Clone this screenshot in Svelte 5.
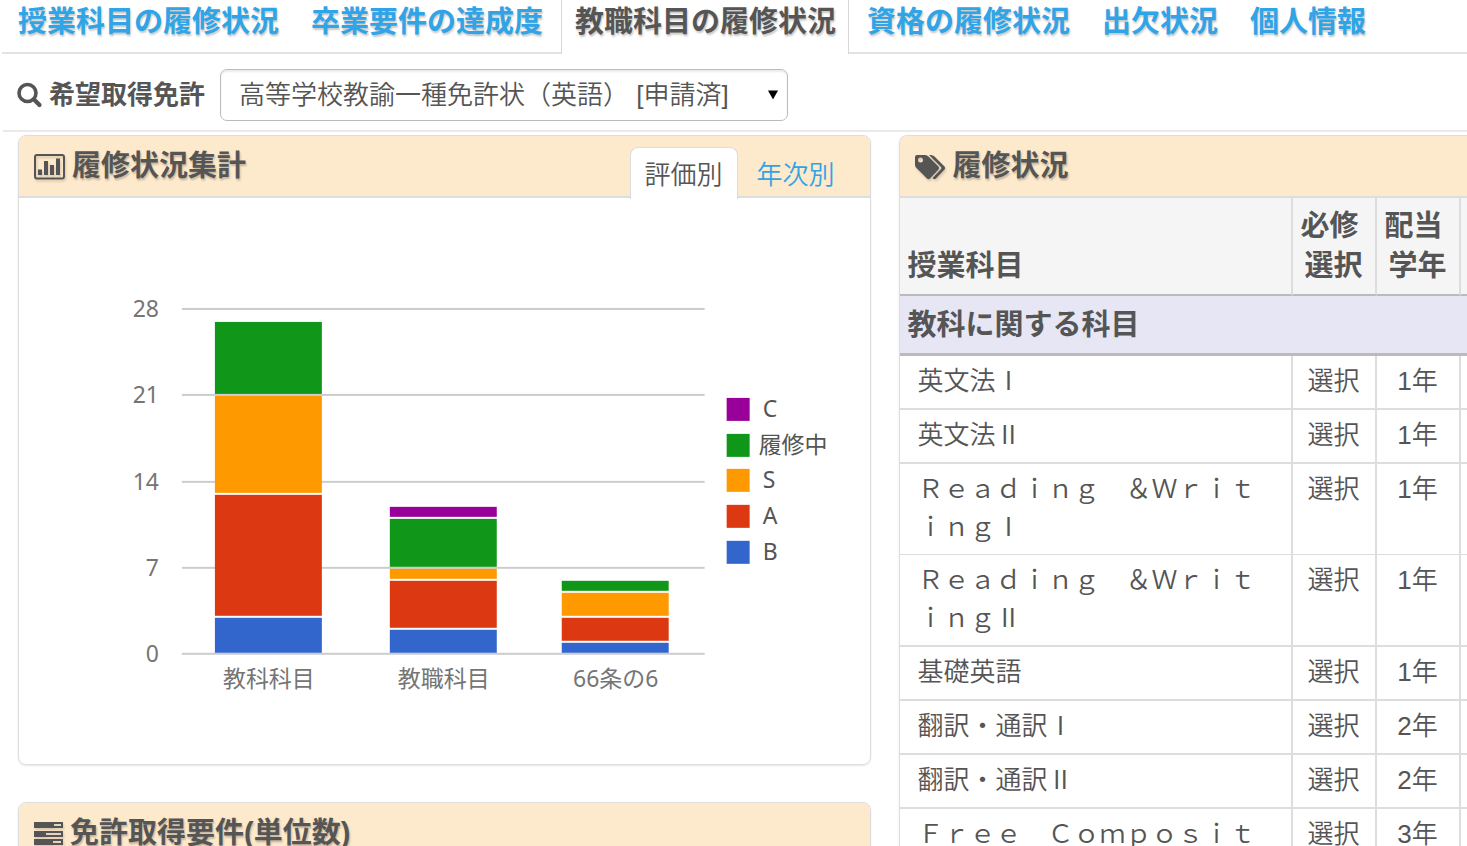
<script>
  const tabs = [
    '授業科目の履修状況',
    '卒業要件の達成度',
    '教職科目の履修状況',
    '資格の履修状況',
    '出欠状況',
    '個人情報',
  ];
  let activeTab = $state(2);
  let chartTab = $state(0);
  let license = $state('1');

  const colors = {
    B: '#3366cc',
    A: '#dc3912',
    S: '#ff9900',
    履修中: '#109618',
    C: '#990099',
  };
  const order = ['B', 'A', 'S', '履修中', 'C'];
  const legend = ['C', '履修中', 'S', 'A', 'B'];
  const ticks = [0, 7, 14, 21, 28];

  const totals = [
    { label: '教科科目', center: 250, values: [3, 10, 8, 6, 0] },
    { label: '教職科目', center: 425, values: [2, 4, 1, 4, 1] },
    { label: '66条の6', center: 597, values: [1, 2, 2, 1, 0] },
  ];

  const baseY = 456;
  const scaleY = (n) => Math.round(baseY - (n * 345) / 28);

  // stack each column from the bottom up, leaving 2px between segments
  function stack(values) {
    let sum = 0;
    const out = [];
    values.forEach((v, i) => {
      if (v > 0) {
        const top = scaleY(sum + v) + 1;
        out.push({ y: top, height: scaleY(sum) - 1 - top, color: colors[order[i]] });
      }
      sum += v;
    });
    return out;
  }

  const courses = [
    { name: '英文法Ⅰ', kind: '選択', year: '1年' },
    { name: '英文法Ⅱ', kind: '選択', year: '1年' },
    { name: 'Ｒｅａｄｉｎｇ　＆ＷｒｉｔｉｎｇⅠ', kind: '選択', year: '1年' },
    { name: 'Ｒｅａｄｉｎｇ　＆ＷｒｉｔｉｎｇⅡ', kind: '選択', year: '1年' },
    { name: '基礎英語', kind: '選択', year: '1年' },
    { name: '翻訳・通訳Ⅰ', kind: '選択', year: '2年' },
    { name: '翻訳・通訳Ⅱ', kind: '選択', year: '2年' },
    { name: 'Ｆｒｅｅ　Ｃｏｍｐｏｓｉｔｉｏｎ', kind: '選択', year: '3年' },
  ];
</script>

<div class="page">
  <nav class="tabs">
    {#each tabs as tab, i}
      <a href="#tab{i}" class:active={activeTab === i} onclick={() => (activeTab = i)}>{tab}</a>
    {/each}
  </nav>

  <div class="search">
    <svg class="search-icon" viewBox="0 0 26 26" width="26" height="26">
      <circle cx="10.500" cy="11" r="8.500" fill="none" stroke="#555" stroke-width="3.600" />
      <path d="M17 17.500l5.500 5.500" stroke="#555" stroke-width="4.200" stroke-linecap="round" />
    </svg>
    <label for="license">希望取得免許</label>
    <div class="select-box">
      <select id="license" bind:value={license}>
        <option value="1">高等学校教諭一種免許状（英語） [申請済]</option>
      </select>
      <svg class="arrow" viewBox="0 0 10 10" width="10" height="10"><path d="M0 .5h10L5 9.500z" fill="#000" /></svg>
    </div>
  </div>

  <main>
    <div class="left">
      <section class="panel">
        <header>
          <h2>
            <svg viewBox="0 0 32 26" width="32" height="26">
              <rect x="1" y="1" width="29" height="23.500" rx="2" fill="none" stroke="#555" stroke-width="2" />
              <path fill="#555" d="M4 15.500h4V21H4zM10 7h4v14h-4zM16 11h4v10h-4zM22 4.500h4V21h-4z" />
            </svg>
            履修状況集計
          </h2>
          <div class="switch">
            <button class:active={chartTab === 0} onclick={() => (chartTab = 0)}>評価別</button>
            <button class:active={chartTab === 1} onclick={() => (chartTab = 1)}>年次別</button>
          </div>
        </header>
        <svg class="chart" viewBox="0 0 851 566">
          {#each ticks as t}
            <rect x="163" y={scaleY(t) - 1} width="523" height="2" fill="#ccc" />
            <text x="140" y={scaleY(t) + 8} text-anchor="end" class="axis">{t}</text>
          {/each}
          {#each totals as col}
            {#each stack(col.values) as seg}
              <rect x={col.center - 54} y={seg.y} width="107" height={seg.height} fill={seg.color} />
            {/each}
            <text x={col.center} y="489" text-anchor="middle" class="axis">{col.label}</text>
          {/each}
          {#each legend as name, i}
            <rect x="708" y={Math.round(200 + i * 35.7)} width="23" height="23" fill={colors[name]} />
            <text x={name.length > 1 ? 740 : 744} y={Math.round(219 + i * 35.7)} class="legend">{name}</text>
          {/each}
        </svg>
      </section>

      <section class="panel">
        <header>
          <h2>
            <svg viewBox="0 0 30 26" width="30" height="26">
              <path
                fill="#555"
                fill-rule="evenodd"
                d="M0 1h29v6H0zM20 3v2h7v-2zM0 10h29v6H0zM12 12v2h15v-2zM0 18h29v6H0zM19 20v2h8v-2z"
              />
            </svg>
            免許取得要件(単位数)
          </h2>
        </header>
        <div class="empty"></div>
      </section>
    </div>

    <section class="panel wide">
      <header>
        <h2>
          <svg viewBox="0 0 32 26" width="32" height="26">
            <path
              fill="#555"
              fill-rule="evenodd"
              d="M0 3q0-2 2-2h8q2 0 3.500 1.500L23.500 12.500q1.500 1.500 0 3L15 24.500q-1.500 1.500-3 0L1.500 14Q0 12.500 0 11zM5.500 3.500a2.500 2.500 0 1 0 0 5a2.500 2.500 0 1 0 0-5z"
            />
            <path fill="#555" d="M14 1h2q2 0 3.500 1.500L29.500 12.500q1.500 1.500 0 3L21 24.500q-2 1.500-3.500-.5L26 15q1-1 0-2z" />
          </svg>
          履修状況
        </h2>
      </header>
      <table>
        <thead>
          <tr>
            <th class="name">授業科目</th>
            <th>必修&nbsp;<br />選択</th>
            <th>配当&nbsp;<br />学年</th>
            <th></th>
          </tr>
        </thead>
        <tbody>
          <tr class="group">
            <th colspan="4">教科に関する科目</th>
          </tr>
          {#each courses as course}
            <tr>
              <td class="name">{course.name}</td>
              <td>{course.kind}</td>
              <td>{course.year}</td>
              <td></td>
            </tr>
          {/each}
        </tbody>
      </table>
    </section>
  </main>
</div>

<style>
  :global(body) {
    background: #fff;
    overflow: hidden;
  }

  .page {
    height: 100vh;
    overflow: hidden;
    color: #555;
    font-family: 'Liberation Sans', 'Noto Sans CJK JP', sans-serif;
    font-size: 26px;
    font-weight: 350;
    line-height: 38px;
  }

  .tabs {
    display: flex;
    margin-left: 2px;
    border-bottom: 2px solid #e3e3e3;
  }

  .tabs a {
    box-sizing: border-box;
    height: 52px;
    padding: 3px 15px 0;
    border: solid transparent;
    border-width: 0 1px;
    color: #2fa4e7;
    font-size: 29px;
    font-weight: 700;
    white-space: nowrap;
    text-decoration: none;
    text-shadow: 1px 2px 2px rgba(0, 0, 0, 0.22);
  }

  .tabs a.active {
    height: 54px;
    padding: 3px 12px 0 13px;
    border-color: #d8d8d8;
    margin: 0 2px -2px;
    background: #fff;
    color: #555;
  }

  .search {
    display: flex;
    align-items: center;
    margin-left: 3px;
    padding: 15px 14px 9px;
    border-bottom: 2px solid #eaeaea;
  }

  .search-icon {
    margin-right: 6px;
  }

  .search label {
    margin-right: 15px;
    font-weight: 700;
  }

  .select-box {
    display: grid;
    align-items: center;
    width: 568px;
  }

  .select-box select,
  .arrow {
    grid-area: 1 / 1;
  }

  select {
    appearance: none;
    box-sizing: border-box;
    width: 100%;
    height: 52px;
    padding: 0 18px;
    border: 1px solid #bbb;
    border-radius: 7px;
    background: #fff;
    color: #555;
    font: inherit;
    box-shadow: inset 0 2px 2px rgba(0, 0, 0, 0.08);
  }

  .arrow {
    justify-self: end;
    margin-right: 10px;
    pointer-events: none;
  }

  main {
    display: grid;
    grid-template-columns: minmax(0, 3fr) minmax(0, 2fr);
    gap: 28px;
    margin: 3px 0 0 18px;
  }

  .left {
    display: grid;
    gap: 37px;
    align-content: start;
  }

  .panel {
    border: 1px solid #ddd;
    border-radius: 8px;
    box-shadow: 0 1px 2px rgba(0, 0, 0, 0.1);
  }

  .wide {
    border-right: 0;
    border-top-right-radius: 0;
  }

  .panel header {
    display: flex;
    justify-content: space-between;
    align-items: flex-start;
    height: 60px;
    padding: 0 15px;
    border-bottom: 2px solid #ddd;
    border-radius: 7px 7px 0 0;
    background: #fde9cb;
  }

  .panel.wide header {
    border-top-right-radius: 0;
  }

  h2 {
    display: flex;
    align-items: center;
    gap: 6px;
    margin: 11px 0 0;
    font-size: 29px;
    line-height: 38px;
    text-shadow: 1px 2px 2px rgba(0, 0, 0, 0.22);
  }

  h2 svg {
    margin-top: 2px;
    filter: drop-shadow(1px 2px 1px rgba(0, 0, 0, 0.15));
  }

  .switch {
    display: flex;
    padding: 11px 5px 0 0;
  }

  .switch button {
    box-sizing: border-box;
    height: 52px;
    padding: 2px 14px 0;
    border: 1px solid transparent;
    border-bottom: 0;
    border-radius: 8px 8px 0 0;
    margin-left: 4px;
    background: none;
    color: #2fa4e7;
    font: inherit;
    cursor: pointer;
  }

  .switch button.active {
    border-color: #ddd;
    background: #fff;
    color: #555;
  }

  .chart {
    display: block;
    width: 100%;
  }

  .axis,
  .legend {
    fill: #757575;
    font-family: 'Noto Sans', 'Noto Sans CJK JP', sans-serif;
    font-size: 23px;
    font-weight: 400;
  }

  .legend {
    fill: #555;
  }

  .empty {
    height: 300px;
  }

  table {
    width: 100%;
    border-spacing: 0;
    table-layout: fixed;
  }

  th,
  td {
    box-sizing: border-box;
    width: 84px;
    padding: 6px 0 8px;
    border-right: 2px solid #ddd;
    border-bottom: 2px solid #ddd;
    text-align: center;
    vertical-align: top;
  }

  th.name,
  td.name {
    width: 393px;
    padding-left: 18px;
    padding-right: 18px;
    text-align: left;
  }

  th {
    font-size: 29px;
    font-weight: 700;
  }

  thead th {
    padding: 8px 0;
    border-bottom-color: #bbb;
    background: #f5f5f5;
    line-height: 40px;
    vertical-align: bottom;
  }

  thead th.name,
  .group th {
    padding-left: 8px;
    text-align: left;
  }

  .group th {
    padding: 10px 8px 9px;
    border-bottom: 3px solid #bbb;
    background: #e6e6f5;
  }

  tbody tr:nth-child(4) td {
    border-bottom-width: 1px;
  }

  th:last-child,
  td:last-child {
    width: auto;
    border-right: 0;
  }
</style>
